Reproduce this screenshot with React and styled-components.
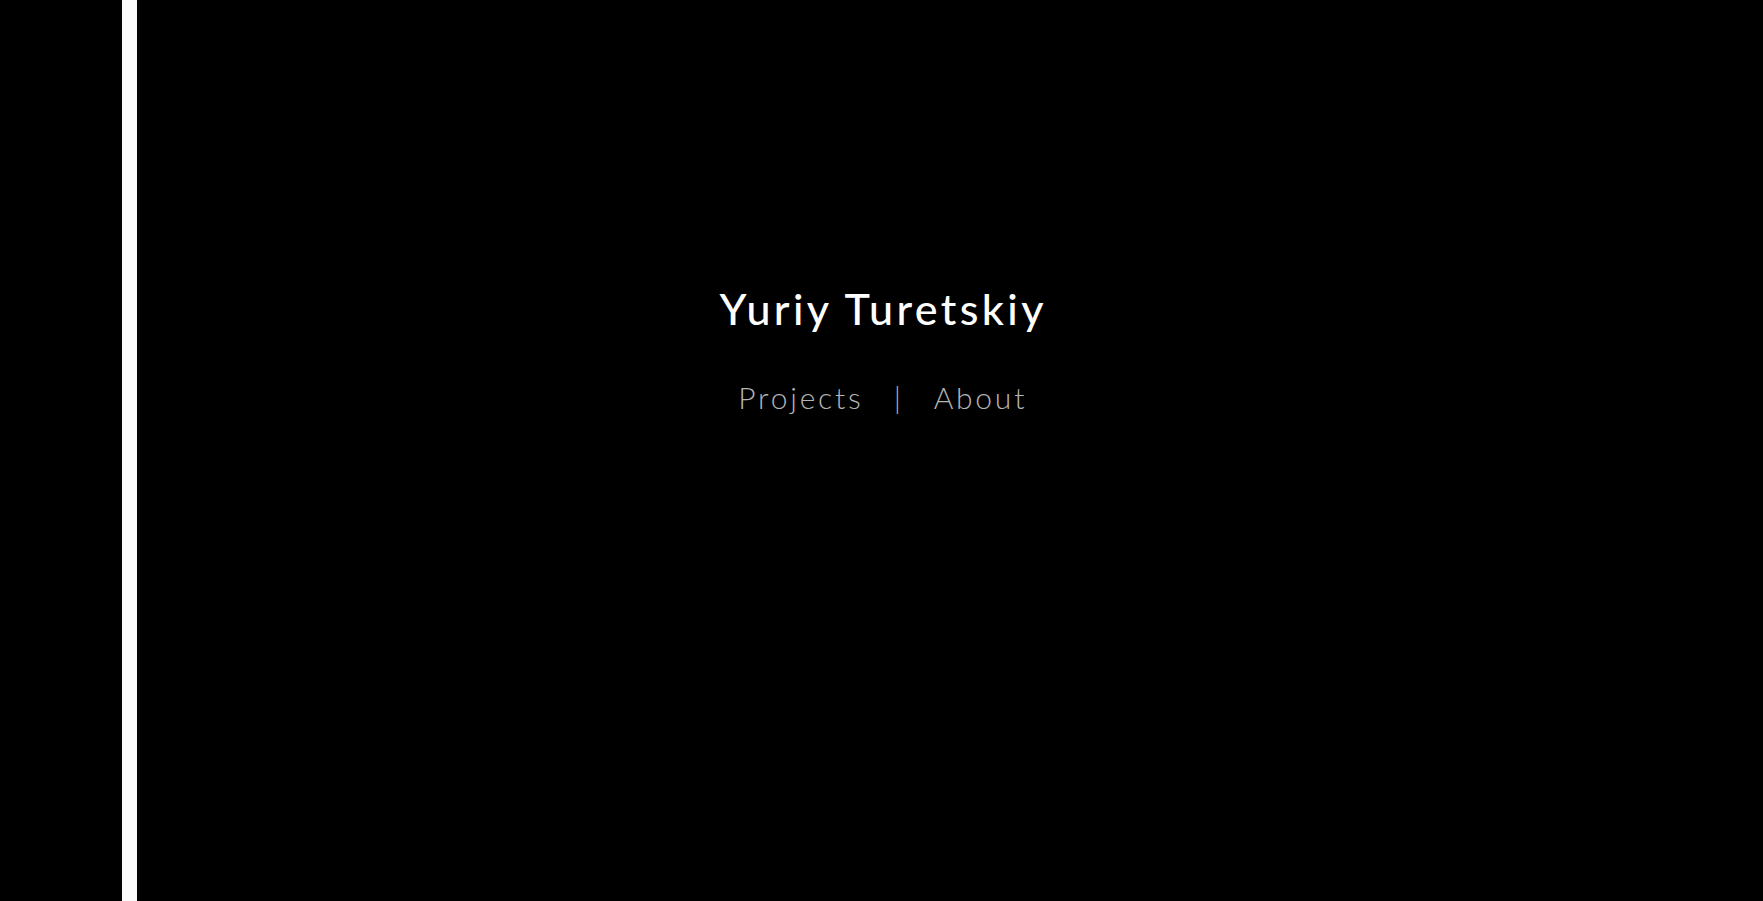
import React from "react"
import styled, { createGlobalStyle } from "styled-components"

const GlobalStyle = createGlobalStyle`
  html, body {
    margin: 0;
    padding: 0;
    background: #000;
  }
  #root {
    min-height: 100vh;
  }
`

const Page = styled.div`
  position: relative;
  min-height: 100vh;
  background: #000;
  display: flex;
  flex-direction: column;
  align-items: center;
  padding-top: 284px;
  box-sizing: border-box;

  &::before {
    content: "";
    position: absolute;
    top: 0;
    bottom: 0;
    left: 122px;
    width: 15px;
    background: #fafafa;
  }
`

const Title = styled.h1`
  margin: 0;
  padding-left: 3.5px;
  font-family: Lato, "Liberation Sans", sans-serif;
  font-size: 43px;
  font-weight: 500;
  letter-spacing: 3.4px;
  color: #fff;
  line-height: 1.17;
`

const Nav = styled.nav`
  display: flex;
  align-items: baseline;
  gap: 30px;
  margin-top: 45px;
  padding-left: 2.5px;
  font-family: Lato, "Liberation Sans", sans-serif;
  font-size: 30px;
  font-weight: 300;
  letter-spacing: 2.8px;
  color: #b4b4b4;
`

const NavLink = styled.a`
  color: inherit;
  text-decoration: none;
  cursor: pointer;
`

const Divider = styled.span`
  color: #b4b4b4;
`

const App = () => {
  return (
    <>
      <GlobalStyle />
      <Page>
        <Title>Yuriy Turetskiy</Title>
        <Nav>
          <NavLink>Projects</NavLink>
          <Divider>|</Divider>
          <NavLink>About</NavLink>
        </Nav>
      </Page>
    </>
  )
}

export default App
